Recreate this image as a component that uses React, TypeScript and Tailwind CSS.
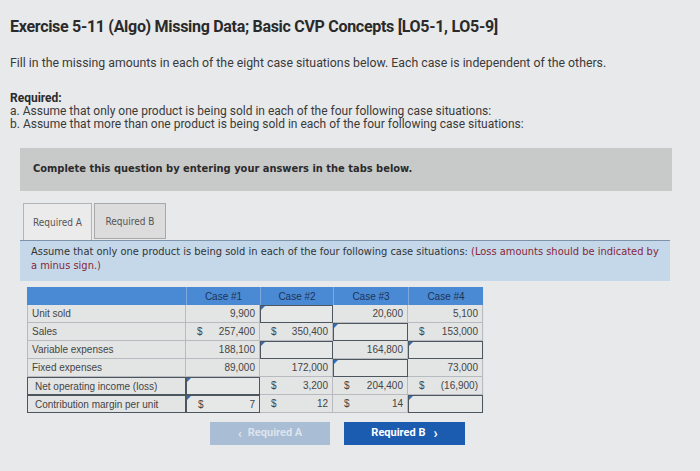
import React from "react";

type Cell = { v?: string; d?: boolean; input?: boolean };

const ROWS: { label: string; boxed?: boolean; cells: Cell[] }[] = [
  {
    label: "Unit sold",
    cells: [{ v: "9,900" }, { input: true }, { v: "20,600" }, { v: "5,100" }],
  },
  {
    label: "Sales",
    cells: [
      { v: "257,400", d: true },
      { v: "350,400", d: true },
      { input: true },
      { v: "153,000", d: true },
    ],
  },
  {
    label: "Variable expenses",
    cells: [{ v: "188,100" }, { input: true }, { v: "164,800" }, { input: true }],
  },
  {
    label: "Fixed expenses",
    cells: [{ v: "89,000" }, { v: "172,000" }, { input: true }, { v: "73,000" }],
  },
  {
    label: "Net operating income (loss)",
    boxed: true,
    cells: [
      { input: true },
      { v: "3,200", d: true },
      { v: "204,400", d: true },
      { v: "(16,900)", d: true },
    ],
  },
  {
    label: "Contribution margin per unit",
    boxed: true,
    cells: [
      { v: "7", d: true, input: true },
      { v: "12", d: true },
      { v: "14", d: true },
      { input: true },
    ],
  },
];

function ValueCell({ c }: { c: Cell }) {
  return (
    <div
      className={
        "relative h-[18px] flex items-center justify-between pl-[11px] pr-[4px] " +
        (c.input
          ? "border border-[#4d565f] bg-[#e6e7e7]"
          : "border-r border-b border-[#b7bbbf]")
      }
    >
      {c.input && (
        <span className="absolute left-0 top-0 w-0 h-0 border-t-[4px] border-r-[4px] border-t-[#2f6fc0] border-r-transparent" />
      )}
      <span>{c.d ? "$" : ""}</span>
      <span>{c.v ?? ""}</span>
    </div>
  );
}

export default function App() {
  return (
    <div className="w-[700px] h-[471px] overflow-hidden bg-[#e8e9ea] text-[#333] font-['Roboto',sans-serif]">
      <h1 className="pt-[17px] pl-[10px] text-[16px] leading-[20px] font-bold text-[#2a2a2a] tracking-[-0.3px]">
        Exercise 5-11 (Algo) Missing Data; Basic CVP Concepts [LO5-1, LO5-9]
      </h1>

      <p className="mt-[18px] pl-[10px] text-[12.3px] leading-[16px] text-[#3a3a3a]">
        Fill in the missing amounts in each of the eight case situations below. Each case is independent of the others.
      </p>

      <div className="mt-[21px] pl-[10px] text-[12px] leading-[13px] text-[#3a3a3a]">
        <div className="font-bold text-[#2a2a2a]">Required:</div>
        <div>a. Assume that only one product is being sold in each of the four following case situations:</div>
        <div>b. Assume that more than one product is being sold in each of the four following case situations:</div>
      </div>

      <div className="mt-[17px] ml-[20px] w-[652px] h-[43px] bg-[#c8c9c9] flex items-center pl-[13px] font-['DejaVu_Sans_Condensed','DejaVu_Sans',sans-serif] text-[11px] font-bold text-[#2b2b2b]">
        Complete this question by entering your answers in the tabs below.
      </div>

      <div className="mt-[12px] ml-[23px] flex gap-[2px] font-['DejaVu_Sans_Condensed','DejaVu_Sans',sans-serif] text-[10px] text-[#555]">
        <div className="w-[69px] h-[37px] bg-[#ebebeb] border border-b-0 border-[#b5b5b5] flex items-center justify-center">
          Required A
        </div>
        <div className="w-[72px] h-[36px] bg-[#dcdcdc] border border-[#a9a9a9] flex items-center justify-center">
          Required B
        </div>
      </div>

      <div className="ml-[20px] w-[650px] h-[41px] bg-[#c4d8ea] border-t border-[#7d93aa] pl-[11px] pr-[9px] pt-[4px] font-['DejaVu_Sans_Condensed','DejaVu_Sans',sans-serif] text-[11px] leading-[14px] text-[#333]">
        Assume that only one product is being sold in each of the four following case situations:{" "}
        <span className="text-[#8a2636]">(Loss amounts should be indicated by a minus sign.)</span>
      </div>

      <div className="mt-[6px] ml-[27px] w-[457px] grid grid-cols-[159px_74px_73px_75px_75px] font-['Liberation_Sans',Arial,sans-serif] text-[10px] text-[#444] bg-[#e3e4e4]">
        <div className="h-[18px] bg-[#4a89d3]" />
        {["Case #1", "Case #2", "Case #3", "Case #4"].map((h) => (
          <div
            key={h}
            className="h-[18px] bg-[#4a89d3] border-l border-[#7fa9dc] flex items-center justify-center text-[#1c3458]"
          >
            {h}
          </div>
        ))}
        {ROWS.map((r) => (
          <React.Fragment key={r.label}>
            <div
              className={
                "h-[18px] flex items-center " +
                (r.boxed
                  ? "border border-[#4d565f] pl-[7px]"
                  : "border-l border-r border-b border-[#b7bbbf] pl-[4px]")
              }
            >
              {r.label}
            </div>
            {r.cells.map((c, i) => (
              <ValueCell key={i} c={c} />
            ))}
          </React.Fragment>
        ))}
      </div>

      <div className="mt-[9px] ml-[210px] flex gap-[14px] text-[11px] font-bold">
        <div className="w-[120px] h-[23px] bg-[#a9bdd5] text-[#dde4ed] flex items-center justify-center gap-[6px]">
          <span className="text-[13px]">‹</span> Required A
        </div>
        <div className="w-[121px] h-[23px] bg-[#1b5cb1] text-white flex items-center justify-center gap-[8px]">
          Required B <span className="text-[14px]">›</span>
        </div>
      </div>
    </div>
  );
}
